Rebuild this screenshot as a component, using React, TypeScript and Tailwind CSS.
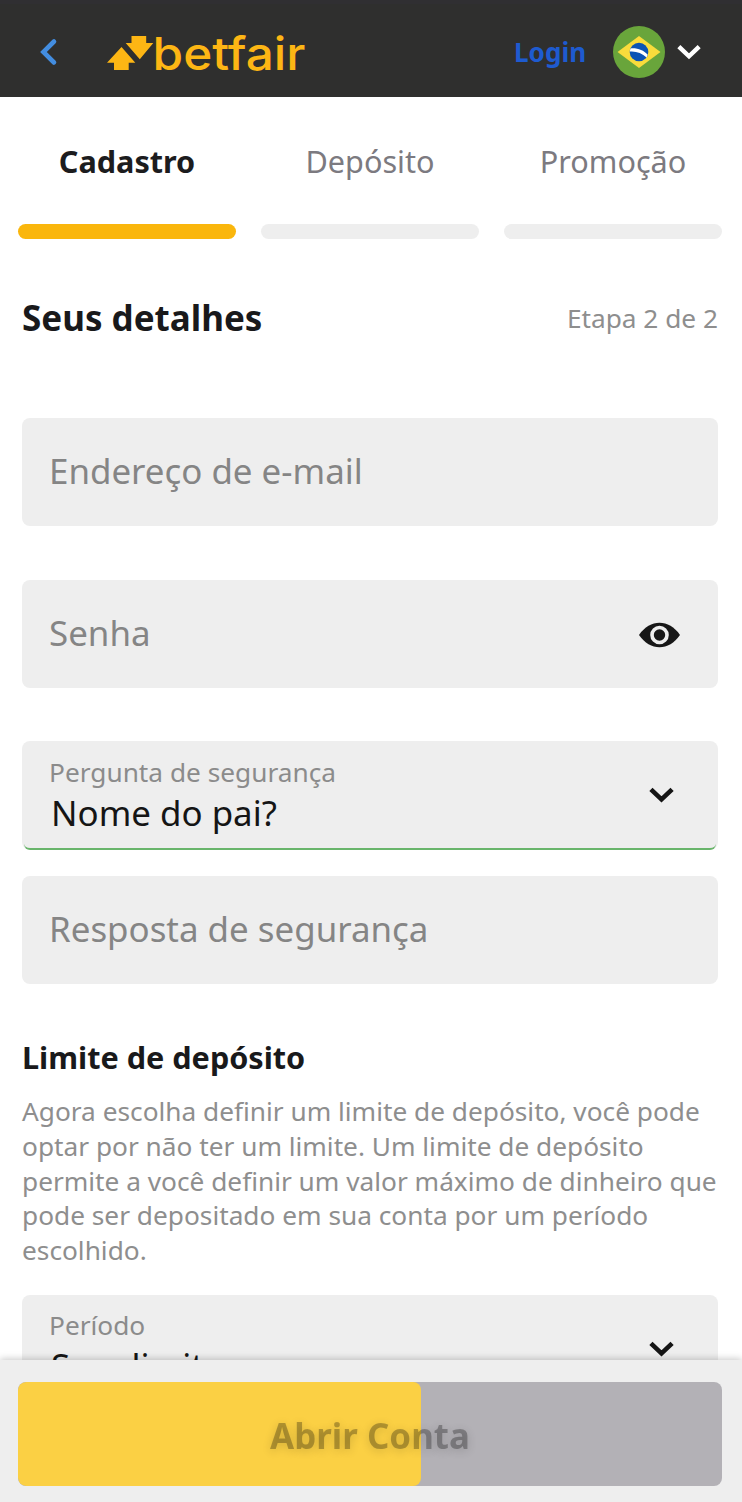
import type { ReactNode } from "react";

const steps = [
  { label: "Cadastro", active: true },
  { label: "Depósito", active: false },
  { label: "Promoção", active: false },
];

const ChevronDown = ({ className }: { className: string }) => (
  <svg viewBox="0 0 26 16" className={className} fill="none" stroke="currentColor" strokeWidth="4.8">
    <path d="M2 2.2 L13 12.6 L24 2.2" />
  </svg>
);

const Logo = () => (
  <svg width="202" height="66" viewBox="0 -9 202 66" className="ml-[49px] mt-px shrink-0 fill-[#fdb614]">
    <path d="M14.5 20 L28.3 35.8 H21.7 V43 H7 V35.8 H0 Z" />
    <path d="M24.5 9 H39.2 V16 H46.3 L32.8 32.3 L18.7 16 H24.5 Z" />
    <text
      x="45.5"
      y="42.5"
      fontFamily="Inter, sans-serif"
      fontSize="45"
      fontWeight="500"
      textLength="153"
      lengthAdjust="spacingAndGlyphs"
    >
      betfair
    </text>
  </svg>
);

const BrazilFlag = () => (
  <svg width="52" height="52" viewBox="0 0 52 52" className="ml-[26px] mt-[3px]">
    <circle cx="26" cy="26" r="26" fill="#69a53b" />
    <path d="M4.5 26 L26 10 L47.5 26 L26 42 Z" fill="#f8dc3c" />
    <circle cx="26" cy="26" r="9.3" fill="#0b54b5" />
    <path d="M17.4 22.5 C24 21.8 30.5 24 34.7 28.8 L33.6 31.4 C29 27 23 24.9 16.8 25.5 Z" fill="#fff" />
  </svg>
);

const Header = () => (
  <header className="flex h-[97px] items-center border-t-4 border-[#302f32] bg-[#2f2f2e] pb-px pl-10">
    <svg
      width="18"
      height="28"
      viewBox="0 0 18 28"
      fill="none"
      stroke="#438de0"
      strokeWidth="4.6"
      strokeLinecap="round"
      className="mt-1"
    >
      <path d="M14 3.5 L3.4 14 L14 24.5" />
    </svg>
    <Logo />
    <a className="ml-[205px] mt-[5px] w-[73px] text-[26.1px] font-bold text-[#1e5bd0]">Login</a>
    <BrazilFlag />
    <ChevronDown className="ml-3 mt-1 h-4 w-[24px] text-white" />
  </header>
);

const Steps = () => (
  <nav className="flex gap-[25px] px-[18px] pt-[44px]">
    {steps.map((step) => (
      <div key={step.label} className="w-[218px] text-center">
        <div
          className={
            step.active
              ? "h-10 text-[30.6px] leading-10 font-bold text-[#1c1c1e]"
              : "h-10 text-[30.6px] leading-10 text-[#7c7a80]"
          }
        >
          {step.label}
        </div>
        <div className={step.active ? "mt-[43px] h-[15px] rounded-full bg-[#fab60c]" : "mt-[43px] h-[15px] rounded-full bg-[#eeeeee]"} />
      </div>
    ))}
  </nav>
);

const Field = ({ label, className, children }: { label: string; className: string; children?: ReactNode }) => (
  <div className={`flex h-[108px] items-center justify-between rounded-[8px] bg-[#eeeeee] pl-[27px] pr-[38px] ${className}`}>
    <span className="pb-[2px] text-[34.9px] leading-[46px] text-[#858585]">{label}</span>
    {children}
  </div>
);

type SelectFieldProps = { label: string; value: string; valid?: boolean; className: string };

const SelectField = ({ label, value, valid, className }: SelectFieldProps) => (
  <div className={`relative flex h-[109px] items-center justify-between rounded-[8px] bg-[#eeeeee] pb-[2px] pl-[27px] pr-11 ${className}`}>
    <div>
      <div className="text-[26.25px] leading-[36px] text-[#8b8b8b]">{label}</div>
      <div className="pl-0.5 text-[34.9px] leading-[46px] text-[#151515]">{value}</div>
    </div>
    <ChevronDown className="mt-px h-4 w-[25px] text-[#151515]" />
    {valid && <span className="absolute inset-x-[2px] bottom-0 h-2 rounded-b-[6px] border-b-2 border-[#69b56b]" />}
  </div>
);

const EyeIcon = () => (
  <svg width="41" height="26" viewBox="0 0 41 26" className="mt-0.5">
    <path d="M0 13 C11 -3.3 30 -3.3 41 13 C30 29.3 11 29.3 0 13 Z" fill="#171717" />
    <circle cx="20.5" cy="13" r="7.5" fill="#171717" stroke="#eeeeee" strokeWidth="3.6" />
  </svg>
);

const SubmitBar = () => (
  <footer className="fixed inset-x-0 bottom-0 h-[142px] bg-[#eeeeee] pl-[18px] pr-5 pt-[22px] shadow-[0_-1px_7px_rgba(0,0,0,0.22)]">
    <button className="relative block h-[104px] w-full overflow-hidden rounded-[8px] bg-[#b3b1b6]">
      <span className="absolute inset-y-0 left-0 w-[403px] rounded-[8px] bg-[#fbd044]" />
      <span className="relative top-0.5 block text-[34.9px] leading-[48px] font-bold text-black/28 [text-shadow:0_2px_10px_rgba(0,0,0,0.16)]">
        Abrir Conta
      </span>
    </button>
  </footer>
);

const App = () => {
  return (
    <div className="h-[1502px] overflow-hidden bg-white font-['Noto_Sans',sans-serif]">
      <Header />
      <Steps />
      <main className="pl-[22px] pr-6">
        <div className="mt-[54px] flex h-[50px] items-center justify-between">
          <h1 className="text-[35px] font-bold text-[#19191b]">Seus detalhes</h1>
          <span className="pt-0.5 text-[26.25px] text-[#8e8e8e]">Etapa 2 de 2</span>
        </div>

        <Field label="Endereço de e-mail" className="mt-[75px]" />
        <Field label="Senha" className="mt-[54px]">
          <EyeIcon />
        </Field>
        <SelectField label="Pergunta de segurança" value="Nome do pai?" valid className="mt-[53px]" />
        <Field label="Resposta de segurança" className="mt-[26px]" />

        <h2 className="mt-[53px] text-[30.6px] leading-10 font-bold text-[#19191b]">Limite de depósito</h2>
        <p className="mt-[17px] text-[26.25px] leading-[34.8px] whitespace-nowrap text-[#8e8e8e]">
          Agora escolha definir um limite de depósito, você pode
          <br />
          optar por não ter um limite. Um limite de depósito
          <br />
          permite a você definir um valor máximo de dinheiro que
          <br />
          pode ser depositado em sua conta por um período
          <br />
          escolhido.
        </p>
        <SelectField label="Período" value="Sem limite" className="mt-[27px]" />
      </main>
      <SubmitBar />
    </div>
  );
};

export default App;
